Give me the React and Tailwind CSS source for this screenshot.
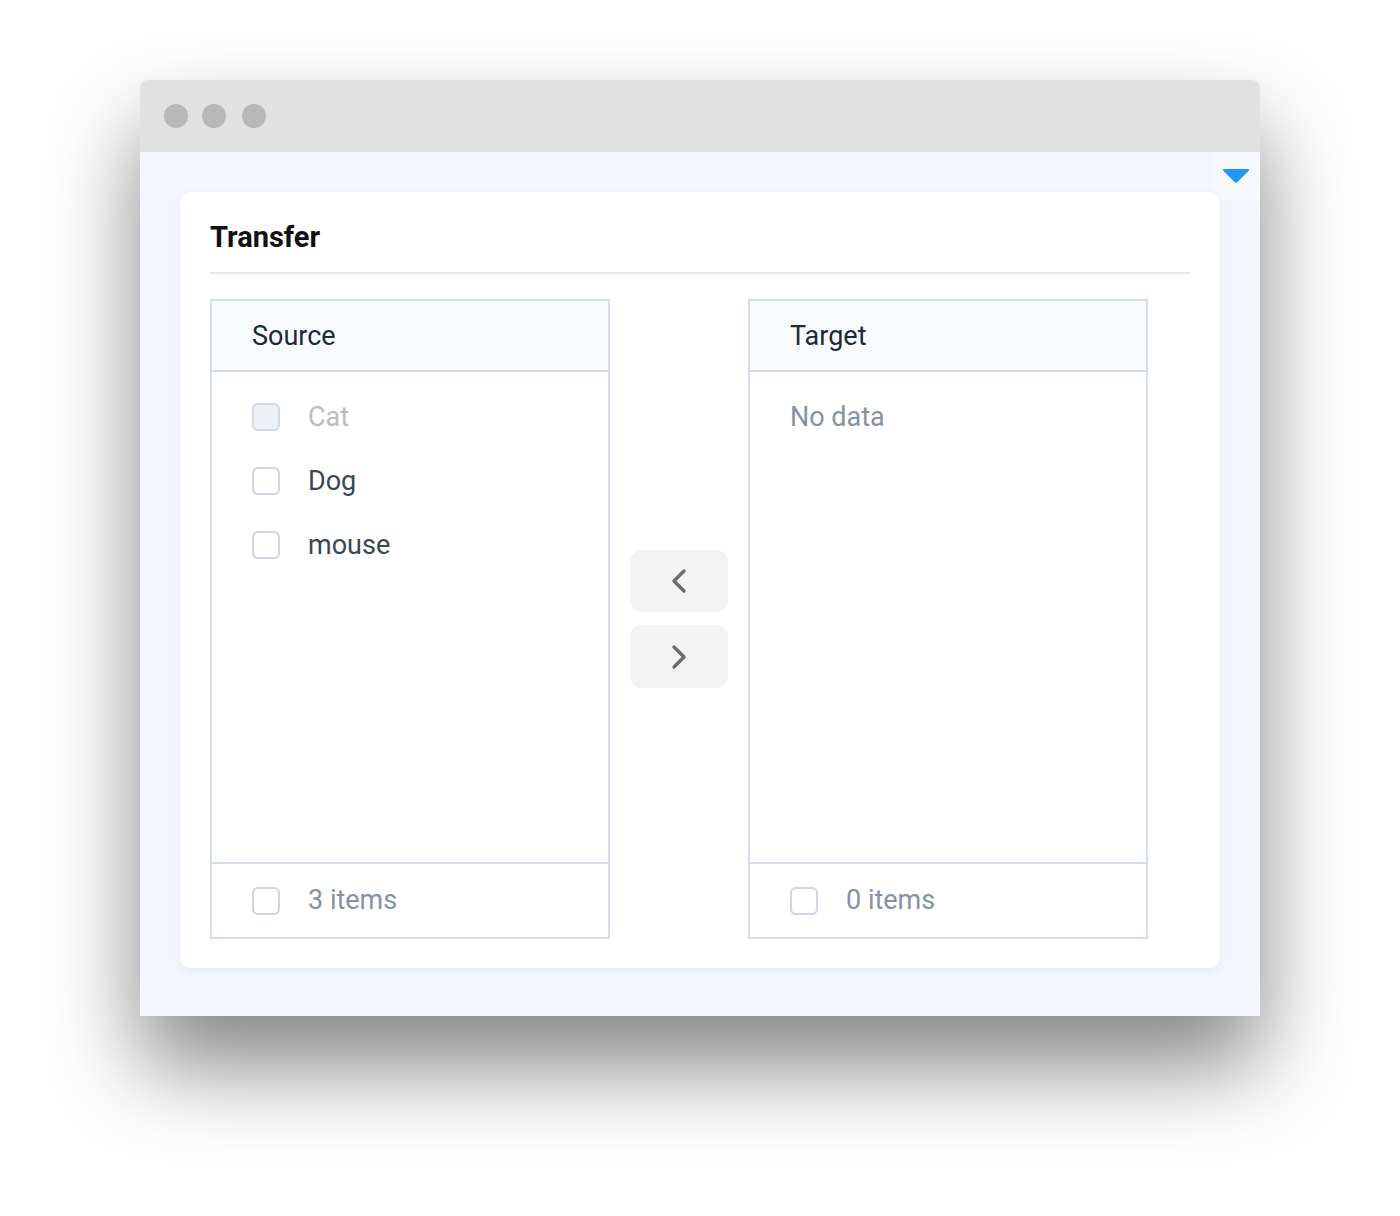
import { ChevronLeft, ChevronRight } from "lucide-react";

const sourceItems = [
  { key: "cat", label: "Cat", disabled: true },
  { key: "dog", label: "Dog" },
  { key: "mouse", label: "mouse" },
];

function Checkbox({ disabled }) {
  return (
    <span
      className={`block h-[28px] w-[28px] shrink-0 rounded-[6px] border-2 ${
        disabled ? "border-[#d3dae3] bg-[#edf0f5]" : "border-[#cdd5df] bg-white"
      }`}
    />
  );
}

function Panel({ title, items, count }) {
  return (
    <div className="flex h-[640px] w-[400px] flex-col border-2 border-[#d5dde6] bg-white">
      <div className="flex h-[71px] items-center border-b-2 border-[#d5dde6] bg-[#f8fbfe] px-[40px] pt-[2px] text-[27px] text-[#1e2938]">
        {title}
      </div>
      <div className="flex-1 px-[40px] pt-[27px]">
        {items.length === 0 && (
          <div className="flex h-[36px] items-center text-[27px] text-[#8592a3]">No data</div>
        )}
        {items.map((item) => (
          <div key={item.key} className="mb-[28px] flex h-[36px] items-center gap-[28px]">
            <Checkbox disabled={item.disabled} />
            <span className={`text-[27px] ${item.disabled ? "text-[#b9bcc0]" : "text-[#3a4656]"}`}>
              {item.label}
            </span>
          </div>
        ))}
      </div>
      <div className="flex h-[75px] items-center gap-[28px] border-t-2 border-[#d5dde6] px-[40px]">
        <Checkbox />
        <span className="text-[27px] text-[#8592a3]">{count} items</span>
      </div>
    </div>
  );
}

export default function App() {
  return (
    <div className="min-h-[1216px] bg-white pl-[140px] pt-[80px]" style={{ fontFamily: "Roboto, 'Liberation Sans', sans-serif" }}>
      <div className="w-[1120px] rounded-t-[8px] shadow-[0_50px_90px_rgba(0,0,0,0.48)]">
        <div className="flex h-[72px] items-center gap-[14px] rounded-t-[8px] bg-[#e1e1e1] pl-[24px]">
          <span className="h-[24px] w-[24px] rounded-full bg-[#b8b8b8]" />
          <span className="h-[24px] w-[24px] rounded-full bg-[#b8b8b8]" />
          <span className="ml-[2px] h-[24px] w-[24px] rounded-full bg-[#b8b8b8]" />
        </div>
        <div className="relative bg-[#f3f6fd] px-[40px] pb-[48px] pt-[40px]">
          <div className="absolute right-0 top-0 flex h-[48px] w-[48px] items-center justify-center rounded-bl-[10px] bg-[#f6f9fe]">
            <svg width="28" height="16" viewBox="0 0 28 16">
              <path d="M2 2 L26 2 L15 13 Q14 14 13 13 Z" fill="#2196f3" stroke="#2196f3" strokeWidth="2" strokeLinejoin="round" />
            </svg>
          </div>
          <div className="relative rounded-[10px] bg-white px-[30px] pb-[29px] shadow-[0_2px_6px_rgba(40,60,100,0.08)]">
            <div className="flex h-[82px] items-center border-b-2 border-[#e3e6ea] pt-[12px] text-[29px] font-bold text-[#111]">
              Transfer
            </div>
            <div className="mt-[25px] flex items-center gap-[20px]">
              <Panel title="Source" items={sourceItems} count={3} />
              <div className="flex flex-col gap-[13px]">
                <button type="button" className="flex h-[62px] w-[98px] items-center justify-center rounded-[12px] bg-[#f3f3f3] text-[#6b6b6b]">
                  <ChevronLeft size={40} strokeWidth={2} />
                </button>
                <button type="button" className="flex h-[63px] w-[98px] items-center justify-center rounded-[12px] bg-[#f3f3f3] text-[#6b6b6b]">
                  <ChevronRight size={40} strokeWidth={2} />
                </button>
              </div>
              <Panel title="Target" items={[]} count={0} />
            </div>
          </div>
        </div>
      </div>
    </div>
  );
}
